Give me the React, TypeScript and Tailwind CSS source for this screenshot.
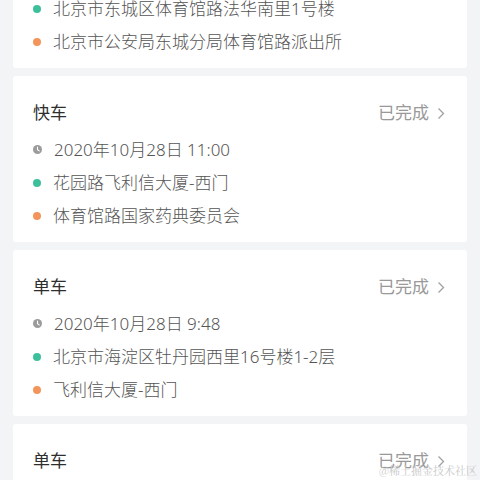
type Trip = {
  id: number;
  kind: string;
  status: string;
  time: string;
  from: string;
  to: string;
};

const trips: Trip[] = [
  {
    id: 1,
    kind: "快车",
    status: "已完成",
    time: "2020年10月28日 18:20",
    from: "北京市东城区体育馆路法华南里1号楼",
    to: "北京市公安局东城分局体育馆路派出所",
  },
  {
    id: 2,
    kind: "快车",
    status: "已完成",
    time: "2020年10月28日 11:00",
    from: "花园路飞利信大厦-西门",
    to: "体育馆路国家药典委员会",
  },
  {
    id: 3,
    kind: "单车",
    status: "已完成",
    time: "2020年10月28日 9:48",
    from: "北京市海淀区牡丹园西里16号楼1-2层",
    to: "飞利信大厦-西门",
  },
  {
    id: 4,
    kind: "单车",
    status: "已完成",
    time: "2020年10月27日 19:12",
    from: "北京市海淀区牡丹园西里16号楼1-2层",
    to: "花园路飞利信大厦-西门",
  },
];

function ClockDot() {
  return (
    <svg width="9" height="9" viewBox="0 0 10 10" className="shrink-0">
      <circle cx="5" cy="5" r="5" fill="#9b9b9b" />
      <path d="M5 2.4V5.2L6.9 6.6" stroke="#fff" strokeWidth="1.2" fill="none" strokeLinecap="round" />
    </svg>
  );
}

function TripCard({ trip }: { trip: Trip }) {
  return (
    <div className="h-[166px] shrink-0 rounded-[3px] bg-white pl-5 pr-[22px] pt-[25px] pb-[10px]">
      <div className="flex h-6 items-center justify-between">
        <span className="text-[17px] text-[#2e2e2e]">{trip.kind}</span>
        <span className="flex items-center gap-[8px] text-[17px] text-[#999999]">
          {trip.status}
          <svg width="8" height="13" viewBox="0 0 8 13" fill="none">
            <path d="M1.5 1.5L6.5 6.5L1.5 11.5" stroke="#a0a0a0" strokeWidth="1.3" />
          </svg>
        </span>
      </div>
      <ul className="mt-2 text-[17px] font-light text-[#555555]">
        <li className="flex h-[33px] items-center gap-[12px]">
          <ClockDot />
          <span>{trip.time}</span>
        </li>
        <li className="flex h-[33px] items-center gap-[12px]">
          <span className="h-2 w-2 shrink-0 rounded-full bg-[#3dbf9b]" />
          <span>{trip.from}</span>
        </li>
        <li className="flex h-[33px] items-center gap-[12px]">
          <span className="h-2 w-2 shrink-0 rounded-full bg-[#f2955a]" />
          <span>{trip.to}</span>
        </li>
      </ul>
    </div>
  );
}

export default function App() {
  return (
    <main
      className="relative h-[480px] w-[480px] overflow-hidden bg-[#f3f4f6]"
      style={{ fontFamily: '"Noto Sans", "Noto Sans CJK SC", sans-serif' }}
    >
      <div className="-mt-[98px] flex flex-col gap-2 px-[13px]">
        {trips.map((trip) => (
          <TripCard key={trip.id} trip={trip} />
        ))}
      </div>
      <span
        className="absolute bottom-[2px] right-[3px] text-[11px] text-[#c9c9c9]"
        style={{ fontFamily: '"Noto Serif CJK SC", "Noto Sans CJK SC", serif' }}
      >
        @稀土掘金技术社区
      </span>
    </main>
  );
}
